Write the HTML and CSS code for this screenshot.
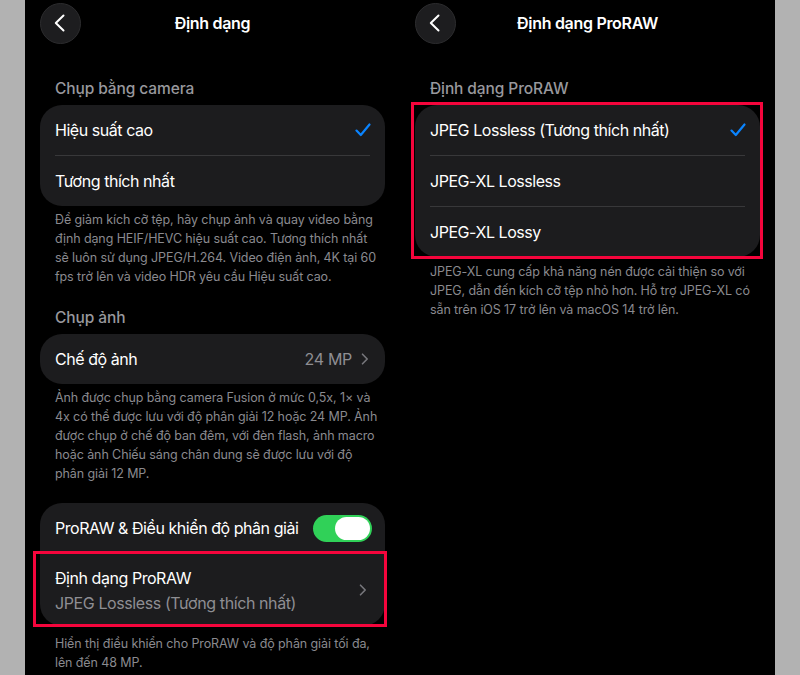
FILE: index.html
```html
<!DOCTYPE html>
<html lang="vi">
<head>
<meta charset="utf-8">
<title>Định dạng</title>
<link rel="stylesheet" href="styles.css">
</head>
<body>
<div class="frame">
  <div class="edge"></div>
  <div class="screen">
    <section class="panel">
      <header class="nav">
        <button class="back" aria-label="Quay lại">
          <svg width="11" height="18" viewBox="0 0 11 18"><path d="M9.5 1.5 L1.8 9 L9.5 16.5" fill="none" stroke="#fff" stroke-width="2" stroke-linecap="round" stroke-linejoin="round"/></svg>
        </button>
        <h1 class="title">Định dạng</h1>
        <span></span>
      </header>

      <h2 class="sec-title">Chụp bằng camera</h2>
      <div class="card">
        <div class="row">
          <span class="label">Hiệu suất cao</span>
          <svg class="check" width="16" height="14" viewBox="0 0 16 14"><path d="M1.5 7.6 L5.8 12 L14.5 1.5" fill="none" stroke="#0a84ff" stroke-width="2.2" stroke-linecap="round" stroke-linejoin="round"/></svg>
        </div>
        <div class="sep"></div>
        <div class="row"><span class="label">Tương thích nhất</span></div>
      </div>
      <p class="note">Để giảm kích cỡ tệp, hãy chụp ảnh và quay video bằng<br>định dạng HEIF/HEVC hiệu suất cao. Tương thích nhất<br>sẽ luôn sử dụng JPEG/H.264. Video điện ảnh, 4K tại 60<br>fps trở lên và video HDR yêu cầu Hiệu suất cao.</p>

      <h2 class="sec-title sec-gap">Chụp ảnh</h2>
      <div class="card">
        <div class="row">
          <span class="label">Chế độ ảnh</span>
          <span class="value">24 MP
            <svg class="chev" width="8" height="12" viewBox="0 0 8 12"><path d="M1.5 1.2 L6.2 6 L1.5 10.8" fill="none" stroke="#77777c" stroke-width="1.6" stroke-linecap="round" stroke-linejoin="round"/></svg>
          </span>
        </div>
      </div>
      <p class="note">Ảnh được chụp bằng camera Fusion ở mức 0,5x, 1× và<br>4x có thể được lưu với độ phân giải 12 hoặc 24 MP. Ảnh<br>được chụp ở chế độ ban đêm, với đèn flash, ảnh macro<br>hoặc ảnh Chiếu sáng chân dung sẽ được lưu với độ<br>phân giải 12 MP.</p>

      <div class="card card-gap">
        <div class="row">
          <span class="label">ProRAW &amp; Điều khiển độ phân giải</span>
          <span class="toggle"><span class="knob"></span></span>
        </div>
        <div class="sep"></div>
        <div class="row row-tall">
          <div class="stack">
            <span class="label">Định dạng ProRAW</span>
            <span class="sub">JPEG Lossless (Tương thích nhất)</span>
          </div>
          <svg class="chev" width="8" height="12" viewBox="0 0 8 12"><path d="M1.5 1.2 L6.2 6 L1.5 10.8" fill="none" stroke="#77777c" stroke-width="1.6" stroke-linecap="round" stroke-linejoin="round"/></svg>
          <span class="mark mark-left"></span>
        </div>
      </div>
      <p class="note note-last">Hiển thị điều khiển cho ProRAW và độ phân giải tối đa,<br>lên đến 48 MP.</p>
    </section>

    <section class="panel">
      <header class="nav">
        <button class="back" aria-label="Quay lại">
          <svg width="11" height="18" viewBox="0 0 11 18"><path d="M9.5 1.5 L1.8 9 L9.5 16.5" fill="none" stroke="#fff" stroke-width="2" stroke-linecap="round" stroke-linejoin="round"/></svg>
        </button>
        <h1 class="title">Định dạng ProRAW</h1>
        <span></span>
      </header>

      <h2 class="sec-title">Định dạng ProRAW</h2>
      <div class="card card-marked">
        <div class="row">
          <span class="label">JPEG Lossless (Tương thích nhất)</span>
          <svg class="check" width="16" height="14" viewBox="0 0 16 14"><path d="M1.5 7.6 L5.8 12 L14.5 1.5" fill="none" stroke="#0a84ff" stroke-width="2.2" stroke-linecap="round" stroke-linejoin="round"/></svg>
        </div>
        <div class="sep"></div>
        <div class="row"><span class="label">JPEG-XL Lossless</span></div>
        <div class="sep"></div>
        <div class="row"><span class="label">JPEG-XL Lossy</span></div>
        <span class="mark mark-right"></span>
      </div>
      <p class="note note-right">JPEG-XL cung cấp khả năng nén được cải thiện so với<br>JPEG, dẫn đến kích cỡ tệp nhỏ hơn. Hỗ trợ JPEG-XL có<br>sẵn trên iOS 17 trở lên và macOS 14 trở lên.</p>
    </section>
  </div>
  <div class="edge"></div>
</div>
</body>
</html>
```

FILE: styles.css
```css
* { box-sizing: border-box; }
html, body { margin: 0; padding: 0; }
body {
  width: 800px;
  height: 675px;
  overflow: hidden;
  font-family: Inter, "Noto Sans", "Liberation Sans", sans-serif;
  background: #b2b2b2;
}
.frame {
  display: flex;
  width: 800px;
  height: 675px;
}
.edge {
  width: 25px;
  flex: none;
  background: #b2b2b2;
}
.screen {
  flex: 1;
  display: flex;
  background: #000;
}
.panel {
  width: 375px;
  flex: none;
  padding: 0 15px;
  display: flex;
  flex-direction: column;
}
.nav {
  height: 46px;
  display: grid;
  grid-template-columns: 40px 1fr 40px;
  align-items: center;
}
.back {
  width: 41px;
  height: 41px;
  border-radius: 50%;
  background: #1d1d1f;
  border: 1px solid #2c2c2e;
  display: flex;
  align-items: center;
  justify-content: center;
  padding: 0 2px 0 0;
  margin: 0;
}
.title {
  margin: 0;
  text-align: center;
  color: #fff;
  font-size: 16px;
  font-weight: 600;
  letter-spacing: -0.3px;
}
.sec-title {
  margin: 33px 0 6px;
  padding-left: 15px;
  font-size: 15.5px;
  font-weight: 500;
  line-height: 20px;
  color: #98989d;
  letter-spacing: -0.1px;
}
.sec-gap { margin-top: 22px; }
.card {
  position: relative;
  background: #1c1c1e;
  border-radius: 22px;
}
.card-gap { margin-top: 20px; }
.row {
  position: relative;
  height: 50px;
  padding: 0 14px 0 15px;
  display: flex;
  align-items: center;
  justify-content: space-between;
}
.row-tall { height: 72px; padding-right: 18px; }
.sep {
  height: 1px;
  margin: 0 15px;
  background: #38383a;
}
.label {
  color: #fff;
  font-size: 16px;
  letter-spacing: -0.45px;
}
.value {
  display: flex;
  align-items: center;
  gap: 9px;
  color: #8e8e93;
  font-size: 16px;
  letter-spacing: -0.3px;
  padding-right: 2px;
}
.stack {
  display: flex;
  flex-direction: column;
  gap: 3px;
  line-height: 22px;
}
.sub {
  color: #8e8e93;
  font-size: 16px;
  letter-spacing: -0.4px;
}
.toggle {
  width: 59px;
  height: 27px;
  border-radius: 14px;
  background: #30d158;
  display: flex;
  align-items: center;
  justify-content: flex-end;
  padding-right: 2px;
  margin-right: -1px;
}
.knob {
  width: 35px;
  height: 23px;
  border-radius: 12px;
  background: #fff;
}
.note {
  margin: 4px 0 0;
  padding-left: 15px;
  font-size: 12.5px;
  line-height: 19px;
  color: #8a8a8f;
  white-space: nowrap;
  letter-spacing: -0.1px;
}
.note-last { margin-top: 8px; }
.note-right { margin-top: 5px; }
.mark {
  position: absolute;
  border: 3px solid #f5053c;
  pointer-events: none;
}
.mark-left { left: -7px; right: -2px; top: -3px; bottom: -1px; }
.mark-right { left: -4px; right: -3px; top: -3px; bottom: -2px; }
```
